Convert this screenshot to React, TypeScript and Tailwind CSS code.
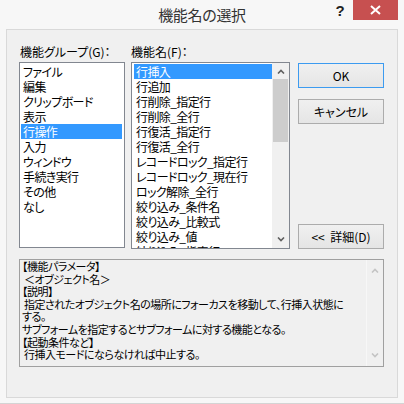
// Windows 8 style "機能名の選択" dialog: two list boxes, buttons, read-only description box.

const groups = [
  'ファイル',
  '編集',
  'クリップボード',
  '表示',
  '行操作',
  '入力',
  'ウィンドウ',
  '手続き実行',
  'その他',
  'なし',
];

const functions = [
  '行挿入',
  '行追加',
  '行削除_指定行',
  '行削除_全行',
  '行復活_指定行',
  '行復活_全行',
  'レコードロック_指定行',
  'レコードロック_現在行',
  'ロック解除_全行',
  '絞り込み_条件名',
  '絞り込み_比較式',
  '絞り込み_値',
  '絞り込み_指定行',
];

const description = [
  '【機能パラメータ】',
  ' ＜オブジェクト名＞',
  '【説明】',
  ' 指定されたオブジェクト名の場所にフォーカスを移動して、行挿入状態に',
  'する。',
  'サブフォームを指定するとサブフォームに対する機能となる。',
  '【起動条件など】',
  ' 行挿入モードにならなければ中止する。',
];

const font = "font-['Noto_Sans_CJK_JP',sans-serif] [font-feature-settings:'palt']";

export default function App() {
  return (
    <div className={`w-[404px] h-[404px] bg-[#f7f7f7] flex flex-col overflow-hidden ${font}`}>
      {/* Title bar */}
      <div className="h-[29px] grid grid-cols-[1fr_auto_1fr] shrink-0">
        <div />
        <div className="pt-[4px] text-[15px] leading-[22px] text-[#333333] tracking-[-0.3px]">
          機能名の選択
        </div>
        <div className="flex justify-end items-start pr-[6px]">
          <div className="w-[26px] h-[20px] flex items-center justify-center text-[15px] font-bold text-[#222] leading-none font-['Liberation_Sans',sans-serif]">
            ?
          </div>
          <div className="w-[45px] h-[20px] bg-[#c75050] flex items-center justify-center">
            <svg width="11" height="10" viewBox="0 0 11 10" aria-hidden>
              <path d="M1 1L10 9M10 1L1 9" stroke="#ffffff" strokeWidth="2" />
            </svg>
          </div>
        </div>
      </div>

      {/* Client area */}
      <div className="mx-[6px] h-[369px] border border-[#d9d9d9] bg-[#f0f0f0] pl-[12px] pr-[13px] pt-[13px] flex flex-col shrink-0">
        <div className="flex">
          {/* Group list */}
          <div className="flex flex-col w-[106px]">
            <div className="h-[17px] leading-[17px] text-[12px] text-black pl-[1px] mb-[2px] whitespace-nowrap">
              機能グループ(G)：
            </div>
            <div className="h-[186px] border border-[#828790] bg-white pt-[1px] pl-[1px] pr-[2px]">
              {groups.map((g) => (
                <ListRow key={g} label={g} selected={g === '行操作'} />
              ))}
            </div>
          </div>

          {/* Function list */}
          <div className="flex flex-col w-[159px] ml-[6px]">
            <div className="h-[17px] leading-[17px] text-[12px] text-black mb-[2px] whitespace-nowrap">
              機能名(F)：
            </div>
            <div className="h-[187px] border border-[#828790] bg-white flex overflow-hidden">
              <div className="flex-1 pt-[1px] pl-[2px] overflow-hidden">
                {functions.map((f) => (
                  <ListRow key={f} label={f} selected={f === '行挿入'} />
                ))}
              </div>
              <div className="w-[17px] bg-[#f0f0f0] flex flex-col">
                <div className="h-[16px] flex items-center justify-center">
                  <Chevron up color="#606060" />
                </div>
                <div className="flex-1 px-[1px]">
                  <div className="h-[63px] bg-[#cdcdcd]" />
                </div>
                <div className="h-[17px] flex items-center justify-center">
                  <Chevron color="#606060" />
                </div>
              </div>
            </div>
          </div>

          {/* Buttons */}
          <div className="flex flex-col w-[86px] ml-[8px] pt-[20px]">
            <DialogButton label="OK" primary />
            <div className="h-[11px]" />
            <DialogButton label="キャンセル" />
            <div className="flex-1" />
            <DialogButton label="<<  詳細(D)" />
          </div>
        </div>

        {/* Description */}
        <div className="mt-[10px] h-[108px] border border-[#a0a0a0] bg-[#f0f0f0] flex">
          <div className="flex-1 pl-[2px] text-[11px] leading-[12.6px] tracking-[-0.5px] text-black whitespace-pre overflow-hidden">
            {description.map((line, i) => (
              <div key={i}>{line}</div>
            ))}
          </div>
          <div className="w-[17px] flex flex-col border-l border-[#f7f7f7]">
            <div className="h-[17px] flex items-center justify-center mt-[2px]">
              <Chevron up color="#c4c4c4" />
            </div>
            <div className="flex-1" />
            <div className="h-[17px] flex items-center justify-center mb-[2px]">
              <Chevron color="#c4c4c4" />
            </div>
          </div>
        </div>
      </div>

      <div className="flex-1 border-b border-[#d4d4d4]" />
    </div>
  );
}

function ListRow({ label, selected }: { label: string; selected: boolean }) {
  return (
    <div
      className={`h-[15px] leading-[15px] text-[12px] tracking-[-0.6px] pl-[2px] whitespace-nowrap ${
        selected ? 'bg-[#3399ff] text-white' : 'text-black'
      }`}
    >
      {label}
    </div>
  );
}

function DialogButton({ label, primary }: { label: string; primary?: boolean }) {
  return (
    <div
      className={`h-[25px] flex items-center justify-center text-[12px] text-black whitespace-pre bg-gradient-to-b from-[#f0f0f0] to-[#e5e5e5] border ${
        primary ? 'border-[#3c9bf0]' : 'border-[#acacac]'
      }`}
    >
      {label}
    </div>
  );
}

function Chevron({ up, color }: { up?: boolean; color: string }) {
  return (
    <svg width="8" height="5" viewBox="0 0 8 5" aria-hidden>
      <path
        d={up ? 'M1 4.5L4 1.5L7 4.5' : 'M1 0.5L4 3.5L7 0.5'}
        fill="none"
        stroke={color}
        strokeWidth="1.6"
      />
    </svg>
  );
}
